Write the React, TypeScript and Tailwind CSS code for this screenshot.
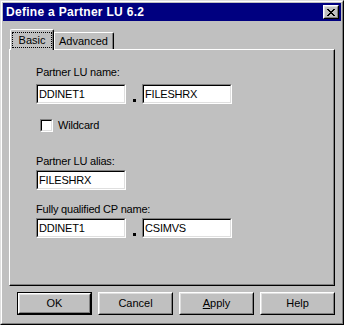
import React from 'react';

const Field: React.FC<{ value: string; width: string }> = ({ value, width }) => (
  <div className={`${width} h-[20px] border border-t-[#808080] border-l-[#808080] border-r-white border-b-white`}>
    <div className="h-full border border-t-black border-l-black border-r-[#dfdfdf] border-b-[#dfdfdf] bg-white pl-[1px] text-[11px] leading-[16px] text-black">
      {value}
    </div>
  </div>
);

const Dot = () => (
  <div className="w-[16px] h-[20px] flex items-end justify-center pb-[2px]">
    <div className="w-[3px] h-[3px] bg-black" />
  </div>
);

const Button: React.FC<{ children: React.ReactNode; isDefault?: boolean }> = ({ children, isDefault }) => (
  <div className={`w-[75px] h-[23px] ${isDefault ? 'border border-black' : ''}`}>
    <div className="h-full border border-t-white border-l-white border-r-black border-b-black">
      <div className="h-full border border-t-[#dfdfdf] border-l-[#dfdfdf] border-r-[#808080] border-b-[#808080] flex items-center justify-center text-[11px] text-black">
        {children}
      </div>
    </div>
  </div>
);

export default function App() {
  return (
    <div className="w-[344px] h-[325px] bg-[#c0c0c0] border border-t-[#dfdfdf] border-l-[#dfdfdf] border-r-black border-b-black font-['Liberation_Sans',Arial,sans-serif] select-none">
      <div className="h-full border border-t-white border-l-white border-r-[#808080] border-b-[#808080] p-[1px] flex flex-col">
        {/* Title bar */}
        <div className="h-[18px] bg-[#000080] flex items-center justify-between pl-[3px] pr-[2px]">
          <span className="text-white font-bold text-[12px] leading-[18px] tracking-[0.3px]">Define a Partner LU 6.2</span>
          <div className="w-[16px] h-[14px] border border-t-white border-l-white border-r-black border-b-black">
            <div className="h-full border border-t-[#dfdfdf] border-l-[#dfdfdf] border-r-[#808080] border-b-[#808080] bg-[#c0c0c0] flex items-center justify-center">
              <svg width="8" height="7" viewBox="0 0 8 7" shapeRendering="crispEdges">
                <path d="M0 0h2v1H0zM6 0h2v1H6zM1 1h2v1H1zM5 1h2v1H5zM2 2h4v1H2zM3 3h2v1H3zM2 4h4v1H2zM1 5h2v1H1zM5 5h2v1H5zM0 6h2v1H0zM6 6h2v1H6z" fill="black" />
              </svg>
            </div>
          </div>
        </div>

        <div className="px-[6px] pt-[8px]">
          {/* Tabs */}
          <div className="flex items-end h-[20px]">
            <div className="relative z-10 ml-[1px] w-[44px] h-[21px] -mb-[1px] bg-[#c0c0c0] border-l border-t border-r border-l-white border-t-white border-r-black rounded-tl-[2px] rounded-tr-[2px]">
              <div className="h-full border-r border-r-[#808080] pt-[2px] pl-[1px]">
                <div className="w-[40px] h-[16px] border border-dotted border-black flex items-center justify-center text-[11px] text-black">
                  Basic
                </div>
              </div>
            </div>
            <div className="w-[60px] h-[17px] border-l border-t border-r border-l-white border-t-white border-r-black rounded-tr-[2px]">
              <div className="h-full border-r border-r-[#808080] flex items-center justify-center text-[11px] leading-[13px] text-black">
                Advanced
              </div>
            </div>
          </div>

          {/* Panel */}
          <div className="h-[237px] border border-t-white border-l-white border-r-black border-b-black">
            <div className="h-full border-r border-b border-r-[#808080] border-b-[#808080] pl-[26px] pt-[16px] text-[11px] leading-[13px] tracking-[-0.2px] text-black">
              <div>Partner LU name:</div>
              <div className="flex mt-[5px]">
                <Field value="DDINET1" width="w-[90px]" />
                <Dot />
                <Field value="FILESHRX" width="w-[90px]" />
              </div>

              <div className="flex items-center mt-[15px] ml-[4px] gap-[5px]">
                <div className="w-[13px] h-[13px] border border-t-[#808080] border-l-[#808080] border-r-white border-b-white">
                  <div className="h-full border border-t-black border-l-black border-r-[#dfdfdf] border-b-[#dfdfdf] bg-white" />
                </div>
                <span>Wildcard</span>
              </div>

              <div className="mt-[23px]">Partner LU alias:</div>
              <div className="flex mt-[2px]">
                <Field value="FILESHRX" width="w-[90px]" />
              </div>

              <div className="mt-[13px]">Fully qualified CP name:</div>
              <div className="flex mt-[2px]">
                <Field value="DDINET1" width="w-[90px]" />
                <Dot />
                <Field value="CSIMVS" width="w-[90px]" />
              </div>
            </div>
          </div>

          {/* Buttons */}
          <div className="flex justify-end gap-[6px] mt-[6px]">
            <Button isDefault>OK</Button>
            <Button>Cancel</Button>
            <Button>
              <span><span className="underline">A</span>pply</span>
            </Button>
            <Button>Help</Button>
          </div>
        </div>
      </div>
    </div>
  );
}
